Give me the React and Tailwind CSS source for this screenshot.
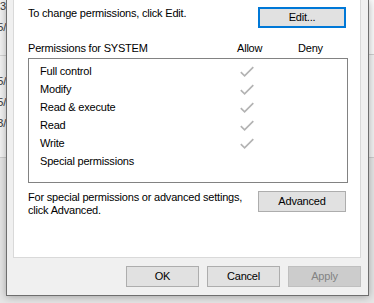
import React from "react";

function Check() {
  return (
    <svg width="14" height="11" viewBox="0 0 14 11" className="block">
      <path d="M0.8 6.2 L4.6 9.8 L13.3 1.2" fill="none" stroke="#b3b3b3" strokeWidth="1.7" />
    </svg>
  );
}

const rows = [
  ["Full control", true],
  ["Modify", true],
  ["Read & execute", true],
  ["Read", true],
  ["Write", true],
  ["Special permissions", false],
];

export default function App() {
  return (
    <div className="w-[374px] h-[303px] bg-[#e6e6e6] overflow-hidden font-['Liberation_Sans',Arial,sans-serif] text-[11px] tracking-[-0.2px] text-black">
      <div className="flex h-[296px]">
        <div className="w-[6px] h-full flex flex-col overflow-hidden">
          <div className="h-[158px] bg-[#f3f3f3] border-b border-[#cdcdcd] flex flex-col items-end text-[#3c3c3c] leading-[21px] whitespace-nowrap">
            <div className="mt-[-4px]">23</div>
            <div>15/</div>
            <div className="mt-[17px] w-full border-t border-[#d4d4d4]" />
            <div className="mt-[15px]">15/</div>
            <div>15/</div>
            <div>13/</div>
          </div>
        </div>

        <div className="relative z-10 w-[363px] h-full bg-[#f0f0f0] border-x border-b border-[#6e6e6e] shadow-[0_1px_8px_rgba(0,0,0,0.3)] flex flex-col">
          <div className="ml-[6px] w-[348px] h-[258px] bg-white border-x border-b border-[#d9d9d9] pl-[14px] pr-[14px] flex flex-col">
            <div className="mt-[7px] flex justify-between items-start">
              <span className="leading-[13px]">To change permissions, click Edit.</span>
              <button className="w-[88px] h-[21px] border-2 border-[#0078d7] bg-[#e1e1e1] flex items-center justify-center leading-none">
                Edit...
              </button>
            </div>

            <div className="mt-[14px] grid grid-cols-[209px_61px_1fr] leading-[13px]">
              <span>Permissions for SYSTEM</span>
              <span>Allow</span>
              <span>Deny</span>
            </div>

            <div className="mt-[3px] w-[320px] h-[125px] border border-[#828282] pt-[3px] pl-[11px] flex flex-col">
              {rows.map(([label, allow]) => (
                <div key={label} className="h-[18px] leading-[18px] grid grid-cols-[200px_14px] items-center">
                  <span>{label}</span>
                  <span>{allow ? <Check /> : null}</span>
                </div>
              ))}
            </div>

            <div className="mt-[8px] flex justify-between items-start">
              <div className="leading-[13px]">
                For special permissions or advanced settings,
                <br />
                click Advanced.
              </div>
              <button className="w-[88px] h-[21px] border border-[#adadad] bg-[#e1e1e1] flex items-center justify-center leading-none">
                Advanced
              </button>
            </div>
          </div>

          <div className="mt-[8px] flex justify-end gap-[8px] pr-[7px]">
            <button className="w-[73px] h-[21px] border border-[#adadad] bg-[#e1e1e1] flex items-center justify-center leading-none">
              OK
            </button>
            <button className="w-[73px] h-[21px] border border-[#adadad] bg-[#e1e1e1] flex items-center justify-center leading-none">
              Cancel
            </button>
            <button className="w-[73px] h-[21px] border border-[#bfbfbf] bg-[#cccccc] text-[#838383] flex items-center justify-center leading-none">
              Apply
            </button>
          </div>
        </div>

        <div className="w-[5px] h-full flex flex-col">
          <div className="h-[158px] bg-[#f3f3f3] border-b border-[#cdcdcd] flex flex-col">
            <div className="h-[55px] bg-[#fbfbfb] border-b border-[#d0d0d0]" />
          </div>
        </div>
      </div>
    </div>
  );
}
